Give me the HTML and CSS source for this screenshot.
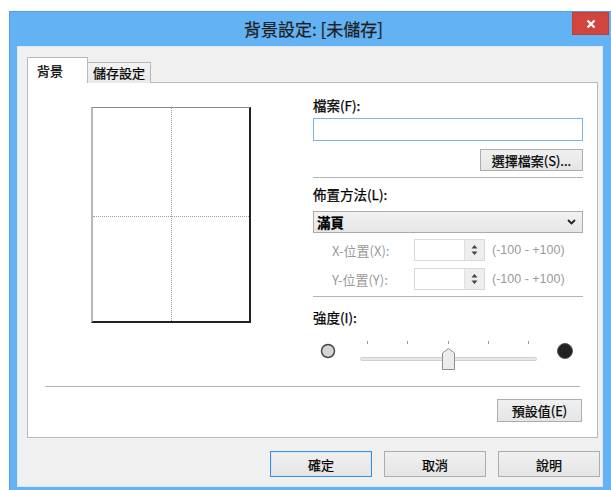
FILE: index.html
```html
<!DOCTYPE html>
<html lang="zh-Hant">
<head>
<meta charset="utf-8">
<title>背景設定</title>
<link rel="stylesheet" href="styles.css">
</head>
<body>
<div class="window">
  <div class="titlebar">
    <span></span>
    <span class="title">背景設定: [未儲存]</span>
    <div class="close">
      <svg width="10" height="10" viewBox="0 0 10 10"><path d="M1.5 1.5 L8.5 8.5 M8.5 1.5 L1.5 8.5" stroke="#fff" stroke-width="2.2" fill="none"/></svg>
    </div>
  </div>
  <div class="client">
    <div class="tabs">
      <div class="tab active">背景</div>
      <div class="tab">儲存設定</div>
    </div>
    <div class="panel">
      <div class="panel-main">
        <div class="preview-col">
          <div class="page">
            <div class="vline"></div>
            <div class="hline"></div>
          </div>
        </div>
        <div class="form-col">
          <div class="label">檔案(F):</div>
          <div class="textbox"></div>
          <div class="btn-row"><div class="btn btn-file">選擇檔案(S)...</div></div>
          <div class="sep"></div>
          <div class="label label-layout">佈置方法(L):</div>
          <div class="select">
            <span>滿頁</span>
            <svg width="9" height="6" viewBox="0 0 9 6"><path d="M1 1 L4.5 4.5 L8 1" stroke="#222" stroke-width="1.8" fill="none"/></svg>
          </div>
          <div class="pos-row">
            <span class="pos-label">X-位置(X):</span>
            <div class="spin">
              <div class="spin-field"></div>
              <div class="spin-btns">
                <svg width="7" height="12" viewBox="0 0 7 12"><path d="M0.5 4.5 L3.5 1 L6.5 4.5 Z M0.5 7.5 L3.5 11 L6.5 7.5 Z" fill="#444"/></svg>
              </div>
            </div>
            <span class="range">(-100 - +100)</span>
          </div>
          <div class="pos-row pos-row-y">
            <span class="pos-label">Y-位置(Y):</span>
            <div class="spin">
              <div class="spin-field"></div>
              <div class="spin-btns">
                <svg width="7" height="12" viewBox="0 0 7 12"><path d="M0.5 4.5 L3.5 1 L6.5 4.5 Z M0.5 7.5 L3.5 11 L6.5 7.5 Z" fill="#444"/></svg>
              </div>
            </div>
            <span class="range">(-100 - +100)</span>
          </div>
          <div class="sep"></div>
          <div class="label label-intensity">強度(I):</div>
          <div class="slider">
            <svg width="270" height="32" viewBox="0 0 270 32">
              <circle cx="15" cy="12" r="6.5" fill="#d4d4d4" stroke="#4a4a4a" stroke-width="1.5"/>
              <rect x="47.5" y="18.5" width="176" height="3" rx="1" fill="#e8e8e8" stroke="#d0d0d0"/>
              <g fill="#9a9a9a">
                <rect x="54" y="2" width="1" height="3"/>
                <rect x="94" y="2" width="1" height="3"/>
                <rect x="135" y="2" width="1" height="3"/>
                <rect x="175" y="2" width="1" height="3"/>
                <rect x="215" y="2" width="1" height="3"/>
              </g>
              <path d="M129.5 14 L135.5 9.5 L141.5 14 L141.5 30.5 L129.5 30.5 Z" fill="#ececec" stroke="#8f8f8f"/>
              <circle cx="252" cy="12" r="7.5" fill="#222" stroke="#555" stroke-width="1"/>
            </svg>
          </div>
        </div>
      </div>
      <div class="sep sep-wide"></div>
      <div class="default-row"><div class="btn btn-default">預設值(E)</div></div>
    </div>
    <div class="dialog-buttons">
      <div class="btn btn-dlg btn-primary">確定</div>
      <div class="btn btn-dlg">取消</div>
      <div class="btn btn-dlg">說明</div>
    </div>
  </div>
</div>
</body>
</html>
```

FILE: styles.css
```css
* { box-sizing: border-box; }
html, body { margin: 0; padding: 0; overflow: hidden; }
body {
  background: #fff;
  font-family: "Noto Sans CJK TC", "Liberation Sans", sans-serif;
  font-size: 12px;
  color: #000;
  width: 611px;
  height: 490px;
  -webkit-text-stroke: 0.25px currentColor;
}
.window {
  margin: 11px 0 0 9px;
  width: 602px;
  height: 479px;
  background: #63b2f3;
  border-top: 1px solid #4c9ee6;
  border-left: 1px solid #4c9ee6;
  display: flex;
  flex-direction: column;
}
.titlebar {
  height: 34px;
  display: grid;
  grid-template-columns: 1fr auto 1fr;
  align-items: start;
}
.title {
  font-size: 17px;
  line-height: 34px;
  color: #1e1e1e;
  padding-left: 6px;
}
.close {
  justify-self: end;
  width: 37px;
  height: 23px;
  margin-right: 2px;
  background: #d0463f;
  border: 1px solid #c23b35;
  display: flex;
  align-items: center;
  justify-content: center;
}
.client {
  margin: 0 8px 3px 7px;
  flex: 1;
  background: #f0f0f0;
  border: 1px solid #dfe7ef;
  padding: 10px 2px 0 9px;
  display: flex;
  flex-direction: column;
}
.tabs {
  display: flex;
  align-items: flex-end;
  height: 26px;
  margin-bottom: -1px;
  position: relative;
  z-index: 1;
}
.tab {
  height: 21px;
  border: 1px solid #b9b9b9;
  border-bottom: none;
  background: linear-gradient(#f3f3f3, #e9e9e9);
  padding: 0 5px;
  line-height: 20px;
  font-size: 13px;
}
.tab + .tab { border-left: none; }
.tab.active {
  height: 26px;
  width: 61px;
  background: #fff;
  padding-left: 9px;
  line-height: 26px;
}
.panel {
  height: 356px;
  margin-right: 2px;
  background: #fff;
  border: 1px solid #b9b9b9;
  display: flex;
  flex-direction: column;
}
.panel-main {
  display: flex;
  padding-top: 14px;
}
.preview-col {
  flex: 0 0 285px;
  padding-left: 63px;
  padding-top: 10px;
}
.page {
  position: relative;
  width: 160px;
  height: 216px;
  border-top: 1px solid #8a8a8a;
  border-left: 2px solid #b8b8b8;
  border-right: 2px solid #222;
  border-bottom: 2px solid #222;
  background: #fff;
}
.vline {
  position: absolute;
  left: 78px;
  top: 0;
  bottom: 0;
  border-left: 1px dotted #a0a0a0;
}
.hline {
  position: absolute;
  top: 108px;
  left: 0;
  right: 0;
  border-top: 1px dotted #a0a0a0;
}
.form-col {
  width: 270px;
  display: flex;
  flex-direction: column;
}
.label {
  height: 16px;
  line-height: 16px;
  font-size: 13.5px;
}
.label-layout { margin-top: 8px; }
.label-intensity { margin-top: 12px; }
.textbox {
  margin-top: 5px;
  height: 23px;
  border: 1px solid #7eb4ea;
  background: #fff;
}
.btn-row {
  margin-top: 8px;
  display: flex;
  justify-content: flex-end;
}
.btn {
  border: 1px solid #adadad;
  background: linear-gradient(#f0f0f0, #e5e5e5);
  display: flex;
  align-items: center;
  justify-content: center;
  font-size: 13px;
}
.btn-file {
  width: 103px;
  height: 22px;
}
.sep {
  margin-top: 6px;
  height: 1px;
  background: #b4b4b4;
}
.select {
  margin-top: 9px;
  height: 22px;
  border: 1px solid #acacac;
  background: linear-gradient(#f2f2f2, #e6e6e6);
  display: flex;
  align-items: center;
  justify-content: space-between;
  padding: 0 6px 0 3px;
  font-size: 13.5px;
  font-weight: 700;
}
.pos-row {
  margin-top: 6px;
  height: 22px;
  display: flex;
  align-items: center;
  color: #9a9a9a;
  -webkit-text-stroke: 0;
}
.pos-row-y { margin-top: 7px; }
.pos-label {
  width: 101px;
  padding-left: 19px;
  font-size: 13px;
}
.spin {
  width: 71px;
  height: 22px;
  border: 1px solid #d9d9d9;
  display: flex;
  background: #fff;
}
.spin-field { flex: 1; }
.spin-btns {
  width: 20px;
  background: #eeeeee;
  border-left: 1px solid #e0e0e0;
  display: flex;
  align-items: center;
  justify-content: center;
}
.range {
  margin-left: 7px;
  font-family: "Liberation Sans", sans-serif;
  font-size: 12.5px;
}
.slider {
  margin-top: 14px;
  height: 32px;
}
.slider svg { display: block; }
.sep-wide {
  margin: 15px 17px 0 17px;
}
.default-row {
  margin-top: 12px;
  display: flex;
  justify-content: flex-end;
  padding-right: 15px;
}
.btn-default {
  width: 85px;
  height: 23px;
}
.dialog-buttons {
  margin-top: 13px;
  display: flex;
  justify-content: flex-end;
  gap: 12px;
}
.btn-dlg {
  width: 102px;
  height: 26px;
}
.btn-primary {
  border: 1px solid #3c8fe0;
  box-shadow: inset 0 0 0 1px #cfe6fb;
}
```
